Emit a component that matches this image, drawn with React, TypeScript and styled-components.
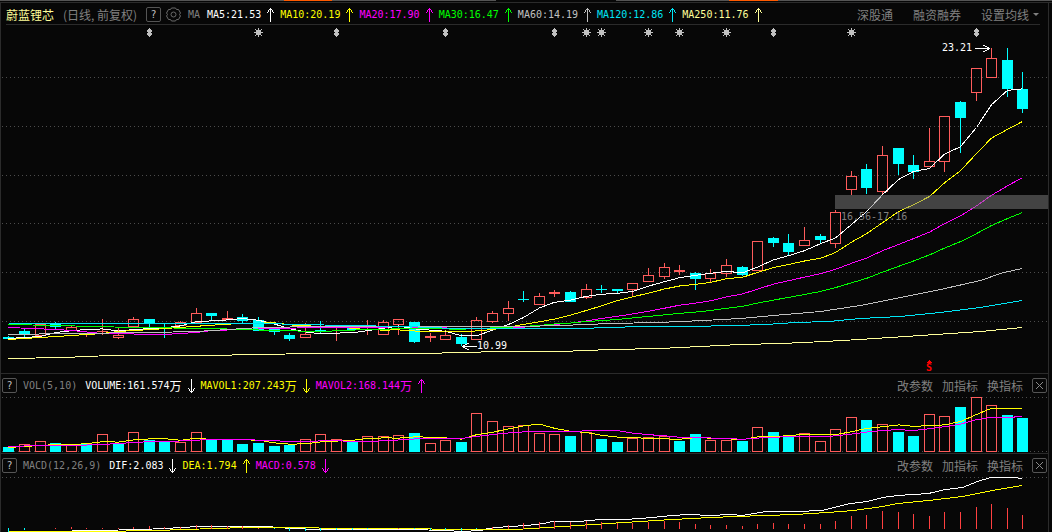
import React, { useEffect, useRef, useState } from "react";
import styled, { createGlobalStyle } from "styled-components";

const UP = "#ff5c5c";
const DOWN = "#00ffff";
const WHITE = "#ffffff";
const YELLOW = "#ffff00";
const MAGENTA = "#ff00ff";
const GREEN = "#00ff00";
const SILVER = "#c0c0c0";
const AQUA = "#00e5f5";
const CREAM = "#ffff99";
const LINE = "#2b2b2b";

const GlobalStyle = createGlobalStyle`
  * { box-sizing: border-box; }
  html, body { margin: 0; background: #070707; }
  body { font: 10px/16px "DejaVu Sans Mono", "Noto Sans CJK SC", monospace; overflow: hidden; }
  button { font: inherit; color: inherit; background: none; border: 0; padding: 0; cursor: pointer; }
`;

const Page = styled.main`
  display: flex;
  flex-direction: column;
  background: #070707;
`;

const TabStrip = styled.div`
  display: flex;
  height: 3px;
  border-bottom: 1px solid ${LINE};
`;

const TabEdge = styled.span<{ $tone: string; $grow: number }>`
  flex: ${(p) => p.$grow} 1 0;
  height: 1px;
  background: ${(p) => p.$tone};
`;

const Frame = styled.div`
  display: flex;
  flex-direction: column;
  margin-right: 3px;
  border: 0 solid ${LINE};
  border-width: 0 1px;
`;

const Panel = styled.section<{ $last?: boolean }>`
  display: flex;
  flex-direction: column;
  border-bottom: ${(p) => (p.$last ? "0" : `1px solid ${LINE}`)};
`;

const TitleBar = styled.header`
  display: flex;
  align-items: center;
  justify-content: space-between;
  height: 22px;
  margin: 0 8px 0 5px;
  padding: 2px 1px 0 0;
  border-bottom: 1px solid ${LINE};
  white-space: nowrap;
`;

const IndicatorBar = styled.header`
  display: flex;
  align-items: center;
  justify-content: space-between;
  height: 23px;
  padding: 0 1px;
  white-space: nowrap;
`;

const Group = styled.div<{ $gap?: number }>`
  display: flex;
  align-items: center;
  gap: ${(p) => p.$gap ?? 0}px;
`;

const StockName = styled.h1`
  margin: 0;
  font: 400 12px/16px "Noto Sans CJK SC", sans-serif;
  color: ${CREAM};
`;

const Period = styled.span`
  width: 76px;
  margin: 0 7px 0 9px;
  font: 12px/16px "Noto Sans CJK SC", sans-serif;
  color: #808080;
`;

const BoxButton = styled.button`
  display: flex;
  align-items: center;
  justify-content: center;
  width: 15px;
  height: 15px;
  border: 1px solid #555;
  border-radius: 2px;
  color: #c0c0c0;
`;

const IconButton = styled.button`
  display: flex;
  width: 15px;
  height: 15px;
  margin: 0 7px 0 5px;
`;

const IndicatorName = styled.span`
  padding: 0 8px 0 6px;
  color: #808080;
`;

const Reading = styled.span<{ $color: string }>`
  display: flex;
  align-items: center;
  color: ${(p) => p.$color};
`;

const Unit = styled.span`
  font: 12px/16px "Noto Sans CJK SC", sans-serif;
`;

const ShortName = styled.span`
  width: 19px;
  color: #808080;
`;

const TextButton = styled.button`
  display: flex;
  align-items: center;
  gap: 4px;
  font: 12px/16px "Noto Sans CJK SC", sans-serif;
  color: #808080;
`;

const Plot = styled.svg`
  display: block;
  width: 100%;
`;

function Trend({ up }: { up: boolean }) {
  return (
    <svg width="19" height="14" viewBox="0 0 19 14" fill="currentColor" shapeRendering="crispEdges" aria-hidden="true">
      {up ? (
        <path d="M9 0h1v14h-1zM8 1h3v1h-3zM7 2h1v2h-1zM11 2h1v2h-1zM6 4h1v1h-1zM12 4h1v1h-1z" />
      ) : (
        <path d="M9 0h1v14h-1zM8 12h3v1h-3zM7 10h1v2h-1zM11 10h1v2h-1zM6 9h1v1h-1zM12 9h1v1h-1z" />
      )}
    </svg>
  );
}

interface ReadingData {
  text: string;
  unit?: string;
  color: string;
  up: boolean;
}

function Readings({ items }: { items: ReadingData[] }) {
  return (
    <Group>
      {items.map((r) => (
        <Reading key={r.text} $color={r.color}>
          {r.text}
          {r.unit && <Unit>{r.unit}</Unit>}
          <Trend up={r.up} />
        </Reading>
      ))}
    </Group>
  );
}

function Gear() {
  return (
    <svg width="15" height="15" viewBox="0 0 15 15" fill="none" stroke="#6a6a6a" aria-hidden="true">
      <path d="M5.5 1H9.5L10.5 2.5H12.5L14.5 6L13.5 7.5L14.5 9L12.5 12.5H10.5L9.5 14H5.5L4.5 12.5H2.5L0.5 9L1.5 7.5L0.5 6L2.5 2.5H4.5Z" />
      <circle cx="7.5" cy="7.5" r="2.5" />
    </svg>
  );
}

function Cross() {
  return (
    <svg width="9" height="9" viewBox="0 0 9 9" stroke="#8a8a8a" aria-hidden="true">
      <path d="M1 1L8 8M8 1L1 8" />
    </svg>
  );
}

/* Body colour, high, body top, body bottom, low */
type Candle = ["u" | "d", number, number, number, number];
const candles: Candle[] = [
  ["d", 336, 337, 339, 340], ["d", 328, 331, 334, 337], ["u", 324, 324, 336, 336], ["d", 322, 324, 327, 329],
  ["u", 325, 327, 331, 331], ["u", 333, 333, 335, 337], ["u", 319, 331, 332, 335], ["u", 328, 335, 338, 339],
  ["u", 317, 319, 327, 327], ["d", 319, 319, 323, 327], ["d", 324, 327, 328, 338], ["u", 321, 322, 326, 326],
  ["u", 308, 313, 323, 323], ["d", 313, 313, 316, 320], ["u", 311, 318, 320, 320], ["d", 314, 317, 321, 323],
  ["d", 317, 320, 331, 331], ["d", 328, 329, 332, 335], ["d", 333, 335, 339, 341], ["u", 323, 334, 338, 338],
  ["d", 321, 330, 331, 333], ["u", 325, 327, 328, 341], ["d", 326, 326, 330, 330], ["u", 320, 329, 330, 335],
  ["u", 320, 322, 335, 335], ["u", 319, 319, 325, 335], ["d", 322, 322, 342, 343], ["u", 333, 336, 338, 342],
  ["u", 331, 335, 340, 340], ["d", 334, 337, 344, 346], ["u", 317, 320, 340, 340], ["u", 311, 313, 322, 323],
  ["u", 301, 308, 314, 321], ["d", 291, 299, 300, 302], ["u", 293, 296, 305, 305], ["u", 290, 292, 294, 297],
  ["d", 291, 292, 302, 302], ["u", 284, 289, 298, 299], ["d", 285, 289, 290, 293], ["d", 289, 289, 291, 293],
  ["u", 283, 283, 290, 296], ["u", 268, 275, 282, 282], ["u", 263, 267, 277, 279], ["u", 265, 270, 272, 275],
  ["d", 272, 273, 279, 290], ["u", 269, 273, 279, 282], ["u", 259, 265, 274, 277], ["d", 266, 267, 275, 276],
  ["u", 241, 241, 271, 271], ["d", 237, 238, 243, 247], ["d", 234, 243, 252, 255], ["u", 227, 240, 246, 246],
  ["d", 234, 236, 240, 243], ["u", 210, 212, 244, 248], ["u", 171, 176, 190, 195], ["d", 164, 169, 188, 194],
  ["u", 146, 155, 192, 194], ["d", 148, 148, 164, 175], ["d", 155, 165, 172, 179], ["u", 128, 161, 167, 167],
  ["u", 116, 116, 162, 172], ["d", 101, 102, 118, 153], ["u", 68, 68, 93, 101], ["u", 48, 58, 78, 78],
  ["d", 48, 60, 89, 97], ["d", 72, 89, 109, 113],
];

const volumeTops = [
  447, 444, 441, 443, 445, 443, 434, 443, 432, 440, 442, 442, 432, 439, 440, 444, 443, 446, 445, 439, 434, 439,
  442, 436, 436, 435, 433, 443, 440, 442, 413, 421, 426, 425, 433, 434, 436, 432, 439, 442, 438, 437, 436, 441,
  434, 440, 440, 441, 427, 432, 436, 433, 441, 429, 417, 420, 424, 432, 436, 414, 416, 407, 397, 405, 415, 418,
];
const fallingVolume = new Set([
  0, 3, 5, 7, 9, 10, 13, 14, 15, 16, 17, 18, 22, 26, 29, 36, 38, 39, 43, 44, 47, 49, 50, 55, 57, 58, 61, 64, 65,
]);

const histogram: [number, number][] = [
  [528, 532], [528, 530], [529, 529], [528, 529], [527, 529], [528, 529], [528, 529], [528, 529], [527, 529],
  [526, 529], [527, 529], [527, 529], [525, 529], [525, 529], [526, 529], [526, 529], [528, 529], [528, 529],
  [528, 531], [528, 531], [528, 531], [528, 530], [528, 530], [528, 529], [529, 529], [528, 529], [528, 529],
  [528, 530], [528, 530], [528, 531], [528, 529], [527, 529], [525, 529], [523, 529], [522, 529], [521, 529],
  [522, 529], [521, 529], [522, 529], [523, 529], [523, 529], [522, 529], [521, 529], [522, 529], [524, 529],
  [525, 529], [525, 529], [526, 529], [524, 529], [523, 529], [524, 529], [524, 529], [524, 529], [521, 529],
  [516, 529], [515, 529], [511, 529], [512, 529], [514, 529], [516, 529], [512, 529], [512, 529], [507, 529],
  [504, 529], [508, 529], [515, 529],
];
const negativeBars = new Set([0, 1, 17, 18, 19, 20, 21, 22, 23, 26, 27, 28, 29, 30]);

type Point = [number, number];

const ma60: Point[] = [
  [8, 334], [70, 333], [149, 332], [196, 331], [227, 329], [260, 327], [320, 326], [520, 326], [560, 325],
  [610, 323], [657, 322], [703, 320], [740, 318], [773, 315], [820, 311], [860, 305], [900, 297], [940, 289],
  [980, 280], [1003, 272], [1022, 268],
];
const ma120: Point[] = [
  [8, 323], [260, 323], [345, 325], [406, 326], [453, 328], [578, 328], [640, 326], [687, 326], [735, 325],
  [765, 324], [795, 322], [828, 321], [860, 318], [900, 316], [940, 312], [980, 307], [1022, 300],
];
const ma250: Point[] = [
  [8, 358], [63, 357], [110, 355], [204, 355], [313, 353], [422, 353], [500, 351], [560, 351], [610, 349],
  [660, 348], [740, 344], [781, 343], [824, 341], [859, 339], [905, 336], [935, 334], [980, 331], [1022, 327],
];
const dif: Point[] = [
  [8, 532], [48, 531], [95, 530], [142, 529], [183, 527], [196, 526], [267, 526], [290, 528], [320, 529],
  [410, 529], [445, 530], [461, 531], [480, 530], [488, 528], [508, 526], [527, 525], [543, 523], [552, 521],
  [578, 521], [600, 519], [625, 519], [652, 517], [672, 515], [688, 514], [710, 515], [730, 514], [742, 515],
  [765, 511], [795, 511], [822, 510], [837, 506], [850, 503], [867, 501], [882, 497], [897, 495], [928, 493],
  [945, 489], [962, 487], [977, 481], [990, 477], [1012, 477], [1022, 478],
];
const dea: Point[] = [
  [8, 531], [95, 531], [157, 530], [182, 529], [217, 528], [242, 527], [296, 527], [340, 528], [423, 528],
  [440, 529], [515, 529], [547, 527], [577, 525], [608, 523], [640, 521], [672, 519], [710, 517], [735, 516],
  [765, 515], [795, 514], [827, 512], [853, 510], [882, 506], [897, 503], [928, 500], [962, 496], [992, 490],
  [1022, 485],
];

const closes = candles.map((c) => (c[0] === "u" ? c[2] : c[3]));

/* Moving average of a series; the lead covers the bars that lack enough history. */
function average(series: number[], span: number, lead: Point[]): Point[] {
  const out: Point[] = [...lead];
  for (let i = span - 1; i < series.length; i++) {
    let sum = 0;
    for (let k = i - span + 1; k <= i; k++) sum += series[k];
    out.push([i, sum / span]);
  }
  return out;
}

const ma5 = average(closes, 5, [[0, 338], [1, 337], [2, 336], [3, 332]]);
const ma10 = average(closes, 10, [[0, 339], [2, 337], [4, 335], [6, 333], [7, 331], [8, 330]]);
const ma20 = average(closes, 20, [[0, 327], [3, 329], [4, 330], [6, 333], [10, 334], [12, 332], [13, 330], [15, 329], [17, 328]]);
const ma30 = average(closes, 30, [[0, 324], [3, 325], [8, 327], [13, 328], [15, 329], [17, 330], [20, 331], [23, 329], [26, 328]]);
const vol5 = average(volumeTops, 5, [[0, 447], [1, 446], [2, 445], [3, 444]]);
const vol10 = average(volumeTops, 10, [[0, 446], [2, 445], [4, 445], [6, 444], [7, 443], [8, 442]]);

function usePlotWidth() {
  const ref = useRef<HTMLDivElement>(null);
  const [width, setWidth] = useState(window.innerWidth - 5);
  useEffect(() => {
    const node = ref.current;
    if (!node) return;
    const observer = new ResizeObserver(() => setWidth(node.clientWidth));
    observer.observe(node);
    return () => observer.disconnect();
  }, []);
  return { ref, width };
}

const FIRST = 8;
const SPAN = 1014;
const barX = (i: number, w: number) => Math.ceil(FIRST + (i * (w - 33)) / (candles.length - 1));
const timeX = (x: number, w: number) => FIRST + ((x - FIRST) * (w - 33)) / SPAN;

function Curve({ points, color }: { points: Point[]; color: string }) {
  const d = points.map(([x, y]) => `${Math.round(x * 10) / 10 + 0.5},${Math.round(y * 10) / 10 + 0.5}`).join(" ");
  return <polyline points={d} fill="none" stroke={color} />;
}

function GridLine({ y, w }: { y: number; w: number }) {
  return <path d={`M2 ${y + 0.5}H${w + 1}`} stroke="#4c4c4c" strokeDasharray="1 3" />;
}

function Bar({ x, top, bottom, up }: { x: number; top: number; bottom: number; up: boolean }) {
  const solid = !up || bottom - top <= 2;
  return solid ? (
    <rect x={x - 5} y={top} width="11" height={Math.max(1, bottom - top)} fill={up ? UP : DOWN} />
  ) : (
    <rect x={x - 4.5} y={top + 0.5} width="10" height={bottom - top - 1} fill="none" stroke={UP} />
  );
}

function Diamond({ x }: { x: number }) {
  return <path d={`M${x} 28h1v1h1v1h1v2h-1v1h1v2h-1v1h-1v1h-1v-1h-1v-1h-1v-2h1v-1h-1v-2h1v-1h1z`} fill={SILVER} />;
}

function Star({ x }: { x: number }) {
  return (
    <g>
      <rect x={x - 2} y="30" width="5" height="5" fill={SILVER} />
      <path
        d={`M${x + 0.5} 28v9M${x - 4} 32.5h9M${x - 3} 29.5h1M${x + 3} 29.5h1M${x - 3} 35.5h1M${x + 3} 35.5h1`}
        stroke={SILVER}
      />
    </g>
  );
}

/* Pointer with its tip at (x, y); dir is 1 when it points right, -1 when it points left. */
function Pointer({ x, y, dir }: { x: number; y: number; dir: 1 | -1 }) {
  const at = (n: number) => (dir === 1 ? x - n : x + n);
  const cell = (n: number, dy: number, len: number) =>
    `M${dir === 1 ? at(n + len - 1) : at(n)} ${y + dy}h${len}v1h${-len}z`;
  return (
    <path
      d={[cell(0, 0, 15), cell(1, -1, 2), cell(1, 1, 2), cell(3, -2, 2), cell(3, 2, 2), cell(5, -3, 2), cell(5, 3, 2)].join("")}
      fill={WHITE}
    />
  );
}

const diamonds = [9, 21, 28, 35, 49, 62];
const stars = [16, 37, 38, 41, 43, 46, 54];

const onBars = (pts: Point[], w: number): Point[] => pts.map(([i, y]) => [barX(i, w), y]);
const onTime = (pts: Point[], w: number): Point[] => pts.map(([x, y]) => [timeX(x, w), y]);

function PriceChart({ w }: { w: number }) {
  const gapX = barX(53, w);
  const peak = barX(63, w);
  const low = barX(29, w);
  const signal = barX(59, w);
  return (
    <Plot height="348" viewBox={`1 25 ${w} 348`} shapeRendering="crispEdges" role="img" aria-label="K线图">
      {[77, 126, 175, 223, 272, 321].map((y) => (
        <GridLine key={y} y={y} w={w} />
      ))}
      {diamonds.map((i) => <Diamond key={i} x={barX(i, w)} />)}
      {stars.map((i) => <Star key={i} x={barX(i, w)} />)}
      {candles.map(([side, high, top, bottom, bot], i) => {
        const x = barX(i, w);
        const color = side === "u" ? UP : DOWN;
        return (
          <g key={i}>
            {high < top && <path d={`M${x + 0.5} ${high}V${top}`} stroke={color} />}
            {bot > bottom && <path d={`M${x + 0.5} ${bottom}V${bot}`} stroke={color} />}
            <Bar x={x} top={top} bottom={bottom} up={side === "u"} />
          </g>
        );
      })}
      <Curve points={onBars(ma5, w)} color={WHITE} />
      <Curve points={onBars(ma10, w)} color={YELLOW} />
      <Curve points={onBars(ma20, w)} color={MAGENTA} />
      <Curve points={onBars(ma30, w)} color={GREEN} />
      <Curve points={onTime(ma60, w)} color={SILVER} />
      <Curve points={onTime(ma120, w)} color={AQUA} />
      <Curve points={onTime(ma250, w)} color={CREAM} />
      <rect x={gapX} y="195" width={w + 1 - gapX} height="14" fill="#808080" fillOpacity="0.5" />
      <text x={gapX + 6} y="220" fill="#808080">16.56-17.16</text>
      <text x={peak - 49} y="51" fill={WHITE}>23.21</text>
      <Pointer x={peak - 2} y={48} dir={1} />
      <text x={low + 16} y="349" fill={WHITE}>10.99</text>
      <Pointer x={low + 1} y={346} dir={-1} />
      <path d={`M${signal} 360h1v1h1v1h1v1h-5v-1h1v-1h1z`} fill="#ff0000" />
      <text x={signal - 3} y="371" fill="#ff0000" fontWeight="700">S</text>
    </Plot>
  );
}

function VolumeChart({ w }: { w: number }) {
  return (
    <Plot height="56" viewBox={`1 397 ${w} 56`} shapeRendering="crispEdges" role="img" aria-label="成交量">
      <GridLine y={397} w={w} />
      <GridLine y={451} w={w} />
      {volumeTops.map((top, i) => (
        <Bar key={i} x={barX(i, w)} top={top} bottom={452} up={!fallingVolume.has(i)} />
      ))}
      <Curve points={onBars(vol5, w)} color={YELLOW} />
      <Curve points={onBars(vol10, w)} color={MAGENTA} />
    </Plot>
  );
}

function MacdChart({ w }: { w: number }) {
  return (
    <Plot height="55" viewBox={`1 477 ${w} 55`} shapeRendering="crispEdges" role="img" aria-label="MACD">
      <GridLine y={477} w={w} />
      <Curve points={onTime(dif, w)} color={WHITE} />
      <Curve points={onTime(dea, w)} color={YELLOW} />
      {histogram.map(([a, b], i) => (
        <rect key={i} x={barX(i, w)} y={a} width="1" height={b - a} fill={negativeBars.has(i) ? DOWN : "#ff4040"} />
      ))}
    </Plot>
  );
}

function IndicatorHeader({ name, items }: { name: string; items: ReadingData[] }) {
  return (
    <IndicatorBar>
      <Group>
        <BoxButton aria-label="帮助">?</BoxButton>
        <IndicatorName>{name}</IndicatorName>
        <Readings items={items} />
      </Group>
      <Group $gap={9}>
        <TextButton>改参数</TextButton>
        <TextButton>加指标</TextButton>
        <TextButton>换指标</TextButton>
        <BoxButton aria-label="关闭">
          <Cross />
        </BoxButton>
      </Group>
    </IndicatorBar>
  );
}

export default function App() {
  const { ref, width } = usePlotWidth();
  return (
    <Page>
      <GlobalStyle />
      <TabStrip>
        <TabEdge $tone="#555" $grow={284} />
        <TabEdge $tone="#ff5a00" $grow={48} />
        <TabEdge $tone="#555" $grow={164} />
        <TabEdge $tone="#070707" $grow={120} />
        <TabEdge $tone="#555" $grow={113} />
        <TabEdge $tone="#ff5a00" $grow={49} />
        <TabEdge $tone="#555" $grow={274} />
      </TabStrip>
      <Frame ref={ref}>
        <Panel>
          <TitleBar>
            <Group>
              <StockName>蔚蓝锂芯</StockName>
              <Period>(日线, 前复权)</Period>
              <BoxButton aria-label="帮助">?</BoxButton>
              <IconButton aria-label="设置">
                <Gear />
              </IconButton>
              <ShortName>MA</ShortName>
              <Readings
                items={[
                  { text: "MA5:21.53", color: WHITE, up: true },
                  { text: "MA10:20.19", color: YELLOW, up: true },
                  { text: "MA20:17.90", color: MAGENTA, up: true },
                  { text: "MA30:16.47", color: GREEN, up: true },
                  { text: "MA60:14.19", color: SILVER, up: true },
                  { text: "MA120:12.86", color: AQUA, up: true },
                  { text: "MA250:11.76", color: CREAM, up: true },
                ]}
              />
            </Group>
            <Group $gap={20}>
              <TextButton>深股通</TextButton>
              <TextButton>融资融券</TextButton>
              <TextButton>
                设置均线
                <svg width="6" height="3" viewBox="0 0 6 3" aria-hidden="true">
                  <path d="M0 0H6L3 3Z" fill="#808080" />
                </svg>
              </TextButton>
            </Group>
          </TitleBar>
          <PriceChart w={width} />
        </Panel>
        <Panel>
          <IndicatorHeader
            name="VOL(5,10)"
            items={[
              { text: "VOLUME:161.574", unit: "万", color: WHITE, up: false },
              { text: "MAVOL1:207.243", unit: "万", color: YELLOW, up: false },
              { text: "MAVOL2:168.144", unit: "万", color: MAGENTA, up: true },
            ]}
          />
          <VolumeChart w={width} />
        </Panel>
        <Panel $last>
          <IndicatorHeader
            name="MACD(12,26,9)"
            items={[
              { text: "DIF:2.083", color: WHITE, up: false },
              { text: "DEA:1.794", color: YELLOW, up: true },
              { text: "MACD:0.578", color: MAGENTA, up: false },
            ]}
          />
          <MacdChart w={width} />
        </Panel>
      </Frame>
    </Page>
  );
}
